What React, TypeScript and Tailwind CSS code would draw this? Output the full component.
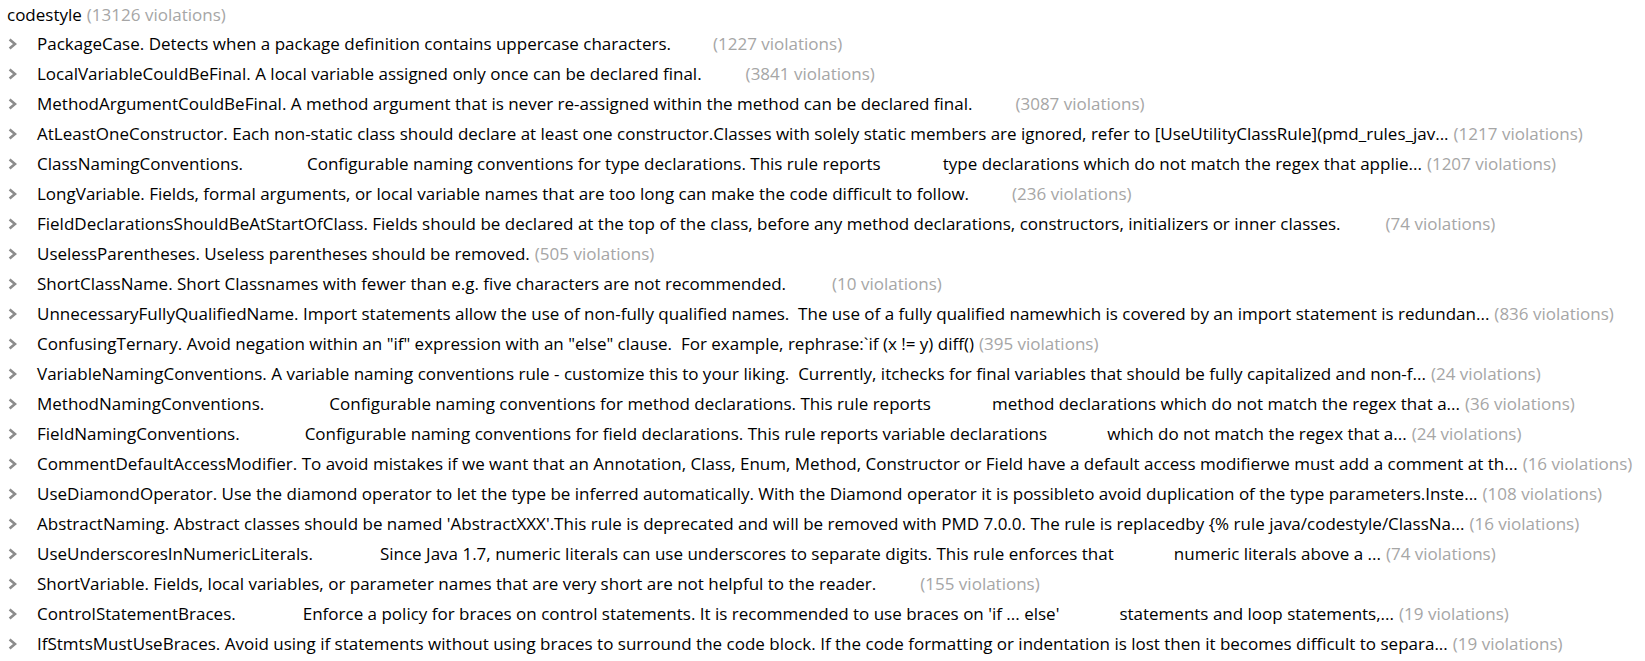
type Rule = {
  parts: string[];
  gaps: string[];
  count: number;
};

// gaps[i] sits before parts[i + 1]; the last one sits before the count
const rules: Rule[] = [
  { parts: ["PackageCase. Detects when a package definition contains uppercase characters."], gaps: ["ml-[42px]"], count: 1227 },
  { parts: ["LocalVariableCouldBeFinal. A local variable assigned only once can be declared final."], gaps: ["ml-[44px]"], count: 3841 },
  { parts: ["MethodArgumentCouldBeFinal. A method argument that is never re-assigned within the method can be declared final."], gaps: ["ml-[43px]"], count: 3087 },
  { parts: ["AtLeastOneConstructor. Each non-static class should declare at least one constructor.Classes with solely static members are ignored, refer to [UseUtilityClassRule](pmd_rules_jav..."], gaps: ["ml-[5px]"], count: 1217 },
  { parts: ["ClassNamingConventions.", "Configurable naming conventions for type declarations. This rule reports", "type declarations which do not match the regex that applie..."], gaps: ["ml-[64px]", "ml-[62px]", "ml-[5px]"], count: 1207 },
  { parts: ["LongVariable. Fields, formal arguments, or local variable names that are too long can make the code difficult to follow."], gaps: ["ml-[43px]"], count: 236 },
  { parts: ["FieldDeclarationsShouldBeAtStartOfClass. Fields should be declared at the top of the class, before any method declarations, constructors, initializers or inner classes."], gaps: ["ml-[45px]"], count: 74 },
  { parts: ["UselessParentheses. Useless parentheses should be removed."], gaps: ["ml-[5px]"], count: 505 },
  { parts: ["ShortClassName. Short Classnames with fewer than e.g. five characters are not recommended."], gaps: ["ml-[46px]"], count: 10 },
  { parts: ["UnnecessaryFullyQualifiedName. Import statements allow the use of non-fully qualified names.  The use of a fully qualified namewhich is covered by an import statement is redundan..."], gaps: ["ml-[5px]"], count: 836 },
  { parts: ["ConfusingTernary. Avoid negation within an \"if\" expression with an \"else\" clause.  For example, rephrase:`if (x != y) diff()"], gaps: ["ml-[5px]"], count: 395 },
  { parts: ["VariableNamingConventions. A variable naming conventions rule - customize this to your liking.  Currently, itchecks for final variables that should be fully capitalized and non-f..."], gaps: ["ml-[5px]"], count: 24 },
  { parts: ["MethodNamingConventions.", "Configurable naming conventions for method declarations. This rule reports", "method declarations which do not match the regex that a..."], gaps: ["ml-[65px]", "ml-[61px]", "ml-[5px]"], count: 36 },
  { parts: ["FieldNamingConventions.", "Configurable naming conventions for field declarations. This rule reports variable declarations", "which do not match the regex that a..."], gaps: ["ml-[65px]", "ml-[60px]", "ml-[5px]"], count: 24 },
  { parts: ["CommentDefaultAccessModifier. To avoid mistakes if we want that an Annotation, Class, Enum, Method, Constructor or Field have a default access modifierwe must add a comment at th..."], gaps: ["ml-[5px]"], count: 16 },
  { parts: ["UseDiamondOperator. Use the diamond operator to let the type be inferred automatically. With the Diamond operator it is possibleto avoid duplication of the type parameters.Inste..."], gaps: ["ml-[5px]"], count: 108 },
  { parts: ["AbstractNaming. Abstract classes should be named 'AbstractXXX'.This rule is deprecated and will be removed with PMD 7.0.0. The rule is replacedby {% rule java/codestyle/ClassNa..."], gaps: ["ml-[5px]"], count: 16 },
  { parts: ["UseUnderscoresInNumericLiterals.", "Since Java 1.7, numeric literals can use underscores to separate digits. This rule enforces that", "numeric literals above a ..."], gaps: ["ml-[67px]", "ml-[60px]", "ml-[5px]"], count: 74 },
  { parts: ["ShortVariable. Fields, local variables, or parameter names that are very short are not helpful to the reader."], gaps: ["ml-[44px]"], count: 155 },
  { parts: ["ControlStatementBraces.", "Enforce a policy for braces on control statements. It is recommended to use braces on 'if ... else'", "statements and loop statements,..."], gaps: ["ml-[67px]", "ml-[60px]", "ml-[5px]"], count: 19 },
  { parts: ["IfStmtsMustUseBraces. Avoid using if statements without using braces to surround the code block. If the code formatting or indentation is lost then it becomes difficult to separa..."], gaps: ["ml-[5px]"], count: 19 },
];

const Chevron = () => (
  <svg width="9" height="12" viewBox="0 0 9 12" fill="none" className="text-[#8c8c8c]">
    <polyline points="1.6,1.4 7,6 1.6,10.6" stroke="currentColor" strokeWidth="2.6" />
  </svg>
);

export default function App() {
  const total = rules.reduce((acc, r) => acc + r.count, 0);

  return (
    <div className="h-[661px] w-full overflow-hidden bg-white text-[17px] text-black [font-family:'Open_Sans',sans-serif]">
      {/* Category header */}
      <div className="flex h-[29px] items-center pl-[7px] whitespace-pre">
        <span>codestyle</span>
        <span className="ml-[5px] text-[#a6a6a6]">({total} violations)</span>
      </div>

      {rules.map((rule, i) => (
        <div key={i} className="flex h-[30px] items-center whitespace-pre">
          <div className="flex w-[37px] shrink-0 items-center pl-[8px]">
            <Chevron />
          </div>
          {rule.parts.map((p, j) => (
            <span key={j} className={j > 0 ? rule.gaps[j - 1] : ""}>
              {p}
            </span>
          ))}
          <span className={`${rule.gaps[rule.gaps.length - 1]} text-[#a6a6a6]`}>({rule.count} violations)</span>
        </div>
      ))}
    </div>
  );
}
